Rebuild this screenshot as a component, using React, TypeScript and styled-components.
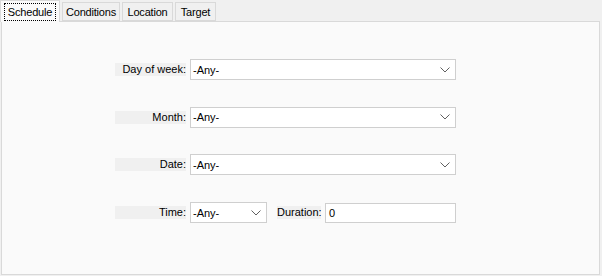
import React from 'react'
import styled, { createGlobalStyle } from 'styled-components'

const GlobalStyle = createGlobalStyle`
  html, body {
    margin: 0;
    padding: 0;
    background: #f0f0f0;
  }
  body {
    font-family: 'Liberation Sans', Arial, sans-serif;
    font-size: 11px;
    color: #000;
  }
`

const Window = styled.div`
  width: 602px;
  height: 276px;
  padding: 0 2px 0 1px;
  box-sizing: border-box;
  display: flex;
  flex-direction: column;
`

const TabStrip = styled.div`
  display: flex;
  align-items: flex-end;
  height: 21px;
  gap: 2px;
  position: relative;
  z-index: 1;
`

const Tab = styled.div<{ $active?: boolean; $width: number }>`
  box-sizing: border-box;
  width: ${(p) => p.$width}px;
  height: ${(p) => (p.$active ? '22px' : '19px')};
  margin-left: ${(p) => (p.$active ? '-1px' : '0')};
  margin-bottom: ${(p) => (p.$active ? '-1px' : '0')};
  display: flex;
  align-items: center;
  justify-content: center;
  background: ${(p) => (p.$active ? '#fafafa' : '#f0f0f0')};
  border: 1px solid #d9d9d9;
  border-bottom: ${(p) => (p.$active ? 'none' : '1px solid #d9d9d9')};
  color: #000;
  white-space: nowrap;
  letter-spacing: -0.2px;
`

const FocusText = styled.span`
  outline: 1px dotted #000;
  padding: 1px 3px;
  line-height: 14px;
`

const Panel = styled.div`
  box-sizing: border-box;
  width: 599px;
  height: 254px;
  background: #fafafa;
  border: 1px solid #d9d9d9;
  padding: 37px 0 0 113px;
  display: flex;
  flex-direction: column;
  gap: 26.7px;
`

const Row = styled.div`
  display: flex;
  align-items: center;
  height: 21px;
`

const Label = styled.div<{ $width: number }>`
  width: ${(p) => p.$width}px;
  height: 13px;
  line-height: 13px;
  background: #f0f0f0;
  text-align: right;
  white-space: nowrap;
  margin-right: 4px;
`

const SelectBox = styled.div<{ $width: number }>`
  box-sizing: border-box;
  width: ${(p) => p.$width}px;
  height: 21px;
  background: #fff;
  border: 1px solid #cfcfcf;
  display: flex;
  align-items: center;
  justify-content: space-between;
  padding: 0 5px 0 2px;
`

const TextBox = styled.div<{ $width: number }>`
  box-sizing: border-box;
  width: ${(p) => p.$width}px;
  height: 20px;
  background: #fff;
  border: 1px solid #cfcfcf;
  display: flex;
  align-items: center;
  padding: 0 3px;
`

const Spacer = styled.div<{ $width: number }>`
  width: ${(p) => p.$width}px;
`

const Chevron = () => (
  <svg width="10" height="6" viewBox="0 0 10 6">
    <path d="M0.5 0.5 L5 5 L9.5 0.5" fill="none" stroke="#606060" strokeWidth="1" />
  </svg>
)

const Select = ({ width, value }: { width: number; value: string }) => (
  <SelectBox $width={width}>
    <span>{value}</span>
    <Chevron />
  </SelectBox>
)

export default function App() {
  return (
    <>
      <GlobalStyle />
      <Window>
        <TabStrip>
          <Tab $active $width={60}>
            <FocusText>Schedule</FocusText>
          </Tab>
          <Tab $width={58}>Conditions</Tab>
          <Tab $width={51}>Location</Tab>
          <Tab $width={41}>Target</Tab>
        </TabStrip>
        <Panel>
          <Row>
            <Label $width={71}>Day of week:</Label>
            <Select width={266} value="-Any-" />
          </Row>
          <Row>
            <Label $width={71}>Month:</Label>
            <Select width={266} value="-Any-" />
          </Row>
          <Row>
            <Label $width={71}>Date:</Label>
            <Select width={266} value="-Any-" />
          </Row>
          <Row>
            <Label $width={71}>Time:</Label>
            <Select width={77} value="-Any-" />
            <Spacer $width={10} />
            <Label $width={44}>Duration:</Label>
            <TextBox $width={131}>0</TextBox>
          </Row>
        </Panel>
      </Window>
    </>
  )
}
